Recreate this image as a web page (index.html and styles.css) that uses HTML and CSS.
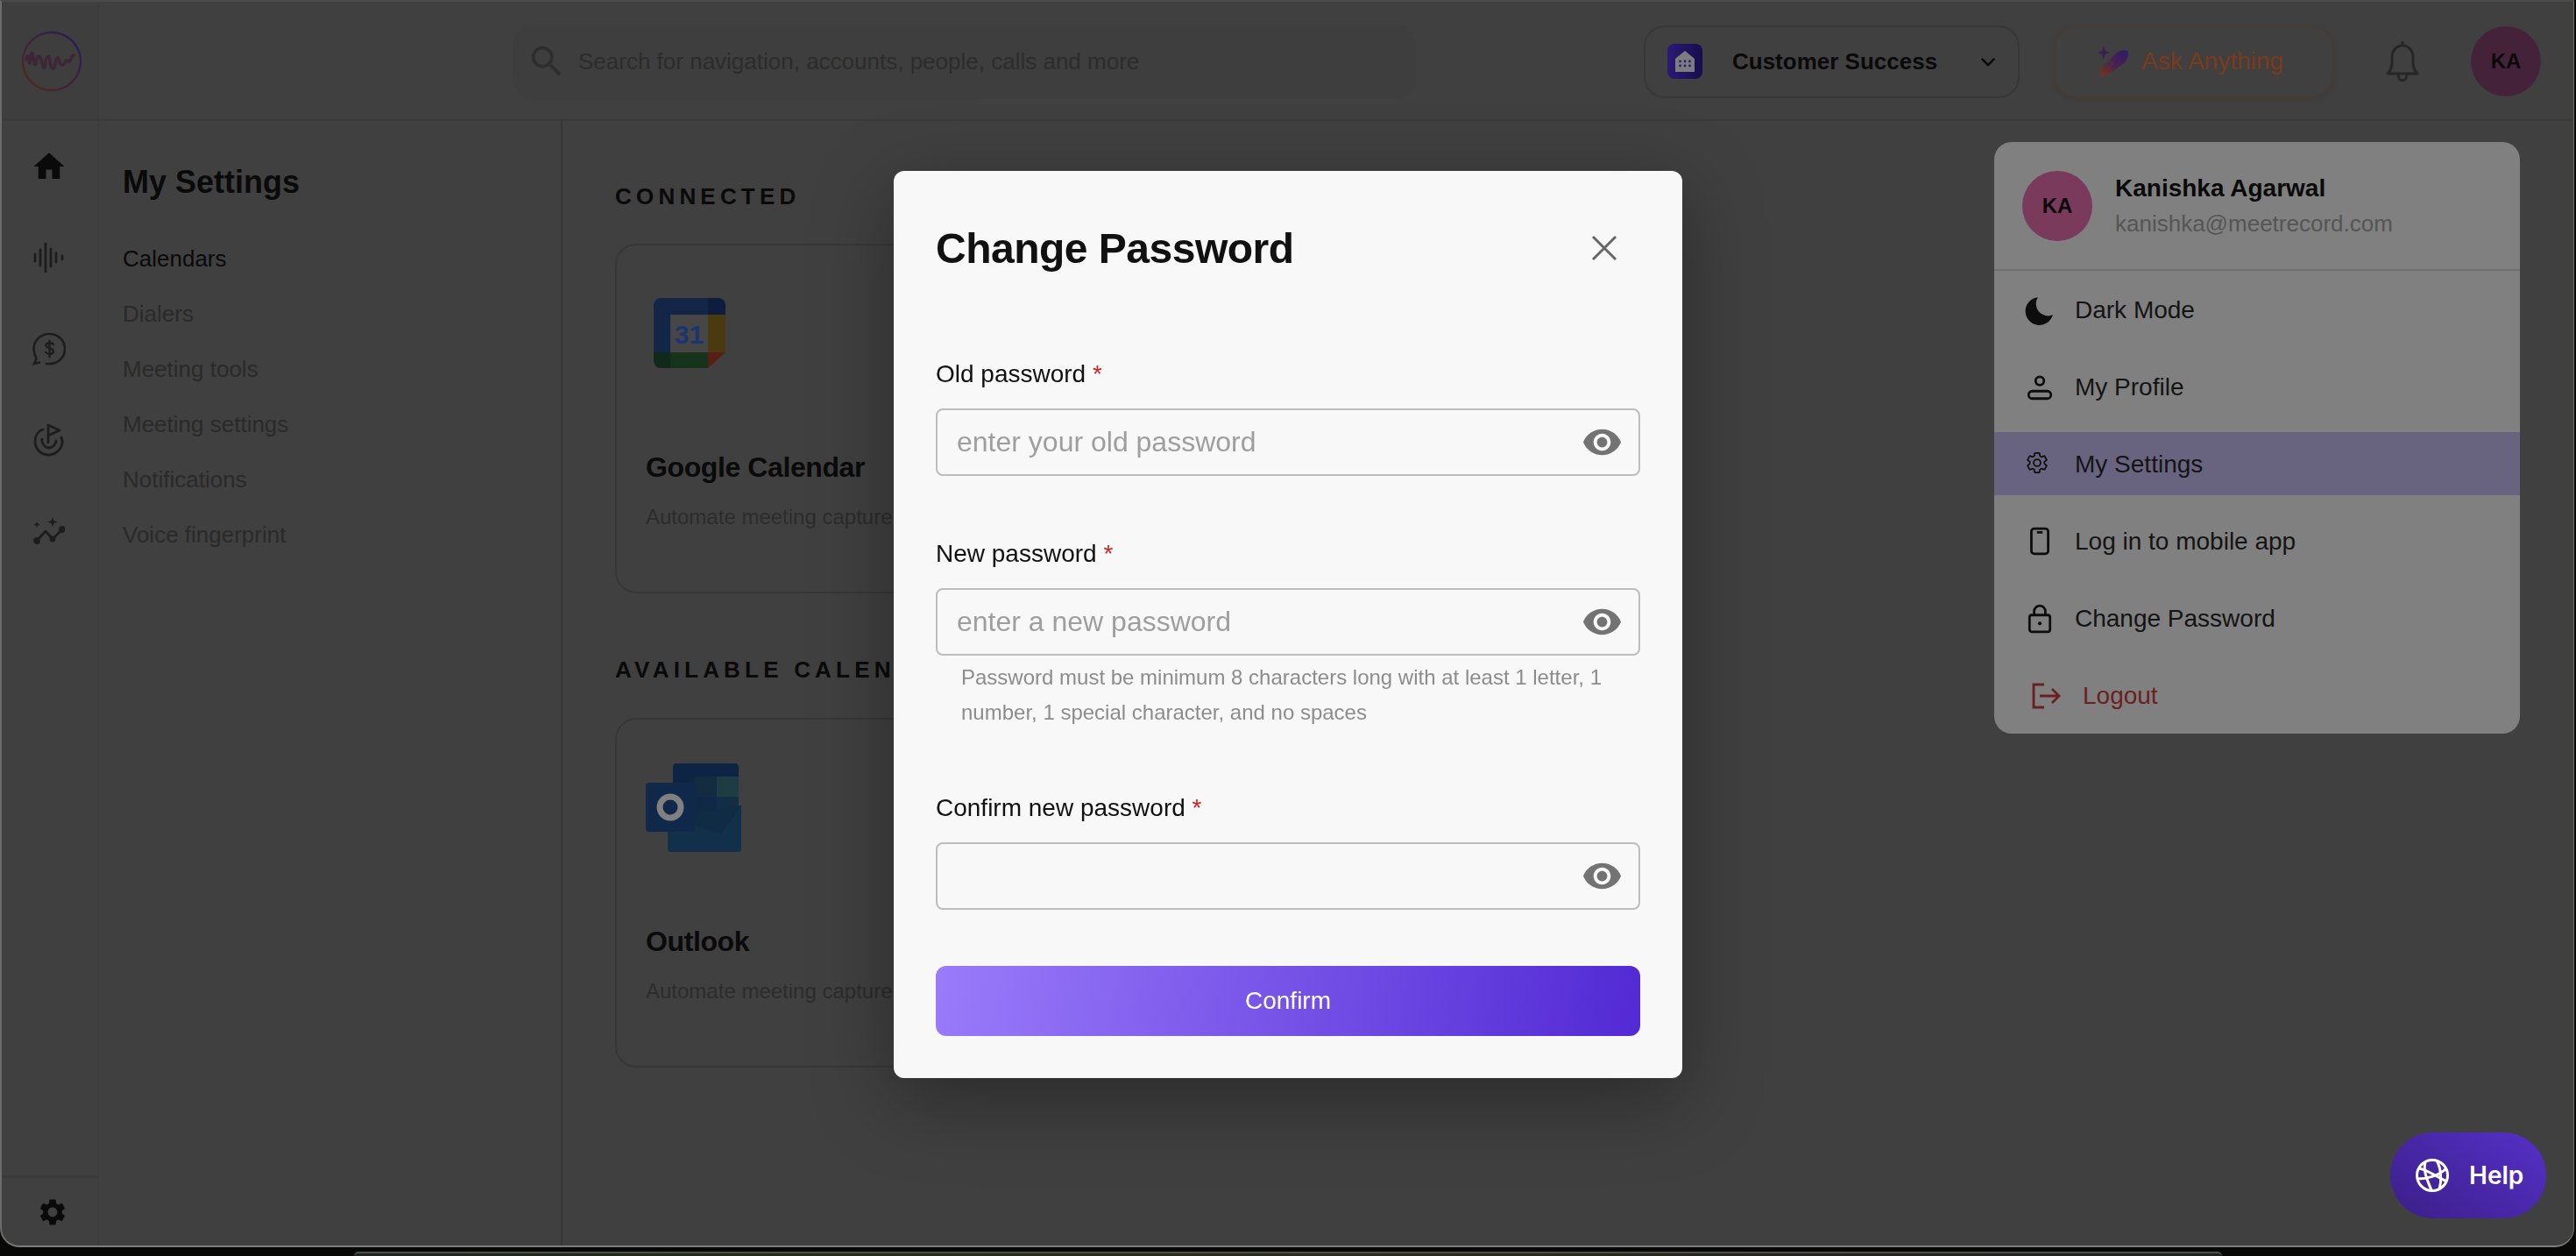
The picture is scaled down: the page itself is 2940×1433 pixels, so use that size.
FILE: index.html
```html
<!DOCTYPE html>
<html lang="en">
<head>
    <meta charset="UTF-8">
    <meta name="viewport" content="width=device-width, initial-scale=1.0">
    <title>Change Password</title>
    <link rel="stylesheet" href="styles.css">
</head>
<body>
    <div class="app">
        <header class="topbar">
            <div class="logo-cell">
                <svg class="logo" viewBox="0 0 70 70" fill="none">
                    <defs>
                        <linearGradient id="logoRing" x1="0" y1="1" x2="1" y2="0">
                            <stop offset="0" stop-color="#50291e"/>
                            <stop offset="0.5" stop-color="#40233c"/>
                            <stop offset="1" stop-color="#221c5a"/>
                        </linearGradient>
                    </defs>
                    <circle cx="35" cy="35" r="33" stroke="url(#logoRing)" stroke-width="2.4"/>
                    <path d="M6 33c1-5 2-6 3 0s1 6 2-2 2-7 3 0 2 10 3 6 1-8 3-8 3 4 4 8 2 8 3 4 1-9 3-11 3 0 3 5 2 9 4 8 2-8 3-10 2-4 3 0 2 6 4 6 3-2 4-4 2-1 3 0 2 0 3-3 2-3 3-4" stroke="#3c2638" stroke-width="3.6" stroke-linejoin="round" stroke-linecap="round"/>
                </svg>
            </div>
            <div class="search">
                <svg class="search-icon" viewBox="0 0 24 24" fill="#2e2e2e"><path d="M15.5 14h-.79l-.28-.27A6.47 6.47 0 0 0 16 9.5 6.5 6.5 0 1 0 9.5 16c1.61 0 3.09-.59 4.23-1.57l.27.28v.79l5 4.99L20.49 19l-4.99-5zm-6 0C7.01 14 5 11.99 5 9.5S7.01 5 9.5 5 14 7.01 14 9.5 11.99 14 9.5 14z"/></svg>
                <span class="search-text">Search for navigation, accounts, people, calls and more</span>
            </div>
            <div class="team-select">
                <svg class="team-icon" viewBox="0 0 40 40">
                    <defs>
                        <linearGradient id="teamBg" x1="0" y1="0" x2="1" y2="0">
                            <stop offset="0" stop-color="#2b1a76"/>
                            <stop offset="1" stop-color="#170d4e"/>
                        </linearGradient>
                    </defs>
                    <rect width="40" height="40" rx="8" fill="url(#teamBg)"/>
                    <path d="M9 17l11-9 11 9v15H9z" fill="#7d7d7d"/>
                    <g fill="#2b1a76">
                        <circle cx="14.5" cy="20" r="1.4"/><circle cx="20" cy="20" r="1.4"/><circle cx="25.5" cy="20" r="1.4"/>
                        <circle cx="14.5" cy="25" r="1.4"/><circle cx="20" cy="25" r="1.4"/><circle cx="25.5" cy="25" r="1.4"/>
                    </g>
                </svg>
                <span class="team-name">Customer Success</span>
                <svg class="chevron" viewBox="0 0 20 12" fill="none" stroke="#0a0a0a" stroke-width="2.8"><path d="M2 2l8 8 8-8"/></svg>
            </div>
            <div class="ask">
                <svg class="ask-icon" viewBox="0 0 36 36">
                    <defs>
                        <linearGradient id="askPen" x1="0" y1="1" x2="1" y2="0">
                            <stop offset="0" stop-color="#7a3516"/>
                            <stop offset="0.5" stop-color="#4a2250"/>
                            <stop offset="1" stop-color="#2a1a70"/>
                        </linearGradient>
                    </defs>
                    <path d="M3 36l1-10L20 10c4-4 10-6 14-4 2 4 0 10-4 14L14 32z" fill="url(#askPen)"/>
                    <path d="M7 0l2 6 5 2-5 2-2 6-2-6-5-2 5-2z" fill="#3a2050"/>
                    <path d="M13 14l1.800 5 5 1.800-5 1.800-1.800 5-1.800-5-5-1.800 5-1.800z" fill="#404040"/>
                    <path d="M13 16l1.200 3.600 3.600 1.200-3.600 1.200-1.200 3.600-1.200-3.600-3.600-1.200 3.600-1.200z" fill="#4c2355"/>
                </svg>
                <span class="ask-text">Ask Anything</span>
            </div>
            <svg class="bell" viewBox="0 0 44 48" fill="none" stroke="#262626" stroke-width="3">
                <path d="M22 1v5"/>
                <path d="M5 38c3-3 5-7 5-13v-6c0-7 5-13 12-13s12 6 12 13v6c0 6 2 10 5 13z" stroke-linejoin="round"/>
                <path d="M17 39c0 9 10 9 10 0"/>
            </svg>
            <div class="avatar avatar-top">KA</div>
        </header>

        <div class="body">
            <nav class="rail">
                <a class="rail-item">
                    <svg width="42" height="42" viewBox="0 0 24 24" fill="#0a0a0a"><path d="M10 20v-6h4v6h5v-8h3L12 3 2 12h3v8z"/></svg>
                </a>
                <a class="rail-item">
                    <svg width="36" height="34" viewBox="0 0 36 34" fill="none" stroke="#1d1d1d" stroke-width="2.8" stroke-linecap="round">
                        <path d="M2 13v8M8 8v18M14 1v32M20 7v20M26 12v10M33 15v4"/>
                    </svg>
                </a>
                <a class="rail-item">
                    <svg width="38" height="38" viewBox="0 0 38 38" fill="none" stroke="#1d1d1d" stroke-width="2.6" stroke-linecap="round">
                        <path d="M16 36h4c9 0 17-7 17-17S29 2 19 2 1.500 10 1.500 19c0 5 1.500 8 3 11l-2.500 6 6-1.500"/>
                        <path d="M24 14c-1-2-8-3-8.500 1-.5 4 9 2.500 8.500 7-.5 4-7 3-9 1M19.500 10v18" stroke-width="2.4"/>
                    </svg>
                </a>
                <a class="rail-item">
                    <svg width="36" height="38" viewBox="0 0 36 38" fill="none" stroke="#1d1d1d" stroke-width="2.8" stroke-linecap="round" stroke-linejoin="round">
                        <path d="M11 7C5 9 2 15 2 21c0 8 7 15 15 15 9 0 16-7 16-15 0-2-.5-4-1-5"/>
                        <path d="M10 18c-1 4 3 10 7.500 10S26 24 26 20"/>
                        <path d="M17 22V2l13 6-13 6"/>
                    </svg>
                </a>
                <a class="rail-item">
                    <svg width="36" height="32" viewBox="0 0 36 32" fill="none" stroke="#1d1d1d" stroke-width="2.8" stroke-linecap="round" stroke-linejoin="round">
                        <path d="M4 27l10-11 8 9 11-11"/>
                        <circle cx="4" cy="27" r="2.500" fill="#1d1d1d"/>
                        <circle cx="22" cy="25" r="2" fill="#1d1d1d"/>
                        <circle cx="33" cy="14" r="2.500" fill="#1d1d1d"/>
                        <path d="M22 0l1.500 4 4 1.500-4 1.500L22 11l-1.500-4-4-1.500 4-1.500z" fill="#1d1d1d" stroke="none"/>
                        <path d="M4 5l1 2.500 2.500 1-2.500 1L4 12l-1-2.500-2.500-1 2.500-1z" fill="#1d1d1d" stroke="none"/>
                    </svg>
                </a>
                <a class="rail-foot">
                    <svg width="36" height="36" viewBox="0 0 24 24" fill="#0a0a0a"><path d="M19.14 12.94c.04-.3.06-.61.06-.94 0-.32-.02-.64-.07-.94l2.03-1.58c.18-.14.23-.41.12-.61l-1.92-3.32c-.12-.22-.37-.29-.59-.22l-2.39.96c-.5-.38-1.03-.7-1.62-.94l-.36-2.54c-.04-.24-.24-.41-.48-.41h-3.84c-.24 0-.43.17-.47.41l-.36 2.54c-.59.24-1.13.57-1.62.94l-2.39-.96c-.22-.08-.47 0-.59.22L2.74 8.87c-.12.21-.08.47.12.61l2.03 1.58c-.05.3-.09.63-.09.94s.02.64.07.94l-2.03 1.58c-.18.14-.23.41-.12.61l1.92 3.32c.12.22.37.29.59.22l2.39-.96c.5.38 1.03.7 1.62.94l.36 2.54c.05.24.24.41.48.41h3.84c.24 0 .44-.17.47-.41l.36-2.54c.59-.24 1.13-.56 1.62-.94l2.39.96c.22.08.47 0 .59-.22l1.92-3.32c.12-.22.07-.47-.12-.61l-2.01-1.58zM12 15.6c-1.98 0-3.6-1.62-3.6-3.6s1.62-3.6 3.6-3.6 3.6 1.62 3.6 3.6-1.62 3.6-3.6 3.6z"/></svg>
                </a>
            </nav>

            <aside class="settings-nav">
                <h2 class="settings-title">My Settings</h2>
                <ul class="settings-list">
                    <li class="active">Calendars</li>
                    <li>Dialers</li>
                    <li>Meeting tools</li>
                    <li>Meeting settings</li>
                    <li>Notifications</li>
                    <li>Voice fingerprint</li>
                </ul>
            </aside>

            <main class="content">
                <h3 class="section-title">CONNECTED</h3>
                <div class="card">
                    <div class="card-logo">
                        <svg class="gcal" viewBox="0 0 82 80">
                            <path d="M8 0h54v19H19v43H0V8a8 8 0 0 1 8-8z" fill="#142648"/>
                            <path d="M62 0h12a8 8 0 0 1 8 8v11H62z" fill="#0e1d3e"/>
                            <rect x="19" y="19" width="43" height="43" fill="#464646"/>
                            <rect x="62" y="19" width="20" height="43" fill="#4a3a10"/>
                            <path d="M19 62h43v18H19z" fill="#16331c"/>
                            <path d="M0 62h19v18H8a8 8 0 0 1-8-8z" fill="#10291a"/>
                            <path d="M62 62h20L62 80z" fill="#5a1d14"/>
                            <text x="40.500" y="52" class="gcal-date">31</text>
                        </svg>
                    </div>
                    <div class="card-title">Google Calendar</div>
                    <div class="card-desc">Automate meeting capture,</div>
                </div>

                <h3 class="section-title section-next">AVAILABLE CALENDARS</h3>
                <div class="card">
                    <div class="card-logo">
                        <svg class="outlook" viewBox="0 0 109 101">
                            <path d="M35 0h67a4 4 0 0 1 4 4v60H31V4a4 4 0 0 1 4-4z" fill="#0e2444"/>
                            <rect x="56" y="15" width="25" height="23" fill="#132c42"/>
                            <rect x="81" y="15" width="25" height="23" fill="#1d3c44"/>
                            <rect x="56" y="38" width="25" height="23" fill="#0f2846"/>
                            <rect x="81" y="38" width="25" height="23" fill="#132d44"/>
                            <path d="M25 62l84-14v49a4 4 0 0 1-4 4H29a4 4 0 0 1-4-4z" fill="#102c44"/>
                            <path d="M25 62l62 18 22-32v49a4 4 0 0 1-4 4H29a4 4 0 0 1-4-4z" fill="#12304a"/>
                            <rect x="0" y="22" width="56" height="56" rx="4" fill="#10294a"/>
                            <ellipse cx="28" cy="50" rx="12" ry="12" fill="none" stroke="#808080" stroke-width="7"/>
                        </svg>
                    </div>
                    <div class="card-title">Outlook</div>
                    <div class="card-desc">Automate meeting capture,</div>
                </div>
            </main>
        </div>

        <div class="user-menu">
            <div class="menu-head">
                <div class="avatar avatar-menu">KA</div>
                <div>
                    <div class="menu-name">Kanishka Agarwal</div>
                    <div class="menu-email">kanishka@meetrecord.com</div>
                </div>
            </div>
            <a class="menu-item">
                <svg class="menu-icon" viewBox="0 0 32 32" fill="#0d0d0d"><path d="M14 2a15 15 0 1 0 16 19A13 13 0 0 1 14 2z"/></svg>
                Dark Mode
            </a>
            <a class="menu-item">
                <svg class="menu-icon" viewBox="0 0 32 32" fill="none" stroke="#0d0d0d" stroke-width="2.6">
                    <circle cx="16" cy="9" r="4.500"/>
                    <rect x="4" y="20" width="24" height="8" rx="4"/>
                </svg>
                My Profile
            </a>
            <a class="menu-item menu-item-active">
                <svg class="menu-icon menu-icon-gear" viewBox="0 0 24 24" fill="none" stroke="#0d0d0d" stroke-width="1.500" stroke-linejoin="round"><path d="M19.14 12.94c.04-.3.06-.61.06-.94 0-.32-.02-.64-.07-.94l2.03-1.58c.18-.14.23-.41.12-.61l-1.92-3.32c-.12-.22-.37-.29-.59-.22l-2.39.96c-.5-.38-1.03-.7-1.62-.94l-.36-2.54c-.04-.24-.24-.41-.48-.41h-3.84c-.24 0-.43.17-.47.41l-.36 2.54c-.59.24-1.13.57-1.62.94l-2.39-.96c-.22-.08-.47 0-.59.22L2.74 8.87c-.12.21-.08.47.12.61l2.03 1.58c-.05.3-.09.63-.09.94s.02.64.07.94l-2.03 1.58c-.18.14-.23.41-.12.61l1.92 3.32c.12.22.37.29.59.22l2.39-.96c.5.38 1.03.7 1.62.94l.36 2.54c.05.24.24.41.48.41h3.84c.24 0 .44-.17.47-.41l.36-2.54c.59-.24 1.13-.56 1.62-.94l2.39.96c.22.08.47 0 .59-.22l1.92-3.32c.12-.22.07-.47-.12-.61l-2.01-1.58z"/><circle cx="12" cy="12" r="3.400"/></svg>
                My Settings
            </a>
            <a class="menu-item">
                <svg class="menu-icon" viewBox="0 0 32 32" fill="none" stroke="#0d0d0d" stroke-width="2.6">
                    <rect x="7" y="2" width="18" height="27" rx="3"/>
                    <path d="M13 6h6"/>
                </svg>
                Log in to mobile app
            </a>
            <a class="menu-item">
                <svg class="menu-icon" viewBox="0 0 32 32" fill="none" stroke="#0d0d0d" stroke-width="2.6">
                    <rect x="5" y="12" width="22" height="18" rx="2.500"/>
                    <path d="M10 12V8a6 6 0 0 1 12 0v4"/>
                    <circle cx="16" cy="21" r="2" fill="#0d0d0d" stroke="none"/>
                </svg>
                Change Password
            </a>
            <a class="menu-item menu-item-logout">
                <svg class="logout-icon" viewBox="0 0 34 30" fill="none" stroke="#6a2020" stroke-width="2.800">
                    <path d="M14 2H2v26h12"/>
                    <path d="M9 15h22M23 7l8 8-8 8"/>
                </svg>
                Logout
            </a>
        </div>

        <button class="help">
            <svg class="help-globe" viewBox="0 0 40 40" fill="none" stroke="#fff" stroke-width="3">
                <circle cx="20" cy="20" r="17.500"/>
                <path d="M12 5c-3 10 3 22 7 32M25 3c5 9 6 22 3 33M3 24c10 0 24-3 33-12M5 12c9 2 22 10 31 15"/>
            </svg>
            Help
        </button>
    </div>

    <div class="dock"></div>

    <div class="overlay">
        <div class="modal">
            <div class="modal-head">
                <h2 class="modal-title">Change Password</h2>
                <svg class="modal-close" viewBox="0 0 30 30" fill="none" stroke="#666" stroke-width="3"><path d="M2 2l26 26M28 2L2 28"/></svg>
            </div>

            <div class="field field-first">
                <label class="field-label" for="oldPassword">Old password <span class="req">*</span></label>
                <div class="input-wrap">
                    <input class="field-input" id="oldPassword" type="password" placeholder="enter your old password">
                    <svg class="eye" viewBox="0 0 24 24" fill="#737373"><path d="M12 4.500C7 4.500 2.730 7.610 1 12c1.730 4.390 6 7.500 11 7.500s9.270-3.110 11-7.500c-1.730-4.390-6-7.500-11-7.500zM12 17c-2.760 0-5-2.240-5-5s2.240-5 5-5 5 2.240 5 5-2.240 5-5 5zm0-8c-1.660 0-3 1.340-3 3s1.340 3 3 3 3-1.340 3-3-1.340-3-3-3z"/></svg>
                </div>
            </div>

            <div class="field">
                <label class="field-label" for="newPassword">New password <span class="req">*</span></label>
                <div class="input-wrap">
                    <input class="field-input" id="newPassword" type="password" placeholder="enter a new password">
                    <svg class="eye" viewBox="0 0 24 24" fill="#737373"><path d="M12 4.500C7 4.500 2.730 7.610 1 12c1.730 4.390 6 7.500 11 7.500s9.270-3.110 11-7.500c-1.730-4.390-6-7.500-11-7.500zM12 17c-2.760 0-5-2.240-5-5s2.240-5 5-5 5 2.240 5 5-2.240 5-5 5zm0-8c-1.660 0-3 1.340-3 3s1.340 3 3 3 3-1.340 3-3-1.340-3-3-3z"/></svg>
                </div>
                <p class="field-help">Password must be minimum 8 characters long with at least 1 letter, 1 number, 1 special character, and no spaces</p>
            </div>

            <div class="field">
                <label class="field-label" for="confirmPassword">Confirm new password <span class="req">*</span></label>
                <div class="input-wrap">
                    <input class="field-input" id="confirmPassword" type="password">
                    <svg class="eye" viewBox="0 0 24 24" fill="#737373"><path d="M12 4.500C7 4.500 2.730 7.610 1 12c1.730 4.390 6 7.500 11 7.500s9.270-3.110 11-7.500c-1.730-4.390-6-7.500-11-7.500zM12 17c-2.760 0-5-2.240-5-5s2.240-5 5-5 5 2.240 5 5-2.240 5-5 5zm0-8c-1.660 0-3 1.340-3 3s1.340 3 3 3 3-1.340 3-3-1.340-3-3-3z"/></svg>
                </div>
            </div>

            <button class="confirm-btn">Confirm</button>
        </div>
    </div>
</body>
</html>
```

FILE: styles.css
```css
* {
    box-sizing: border-box;
}

html,
body {
    height: 1433px;
}

body {
    margin: 0;
    overflow: hidden;
    background: #080806;
    font-family: "Liberation Sans", Arial, sans-serif;
    color: #0a0a0a;
}

h2,
h3,
p,
ul {
    margin: 0;
    padding: 0;
}

/* app frame, all colours are the dimmed ones seen under the overlays */
.app {
    position: relative;
    display: flex;
    flex-direction: column;
    width: 2938px;
    height: 1423px;
    background: #404040;
    border-left: 2px solid #6c6c6c;
    border-top: 2px solid #4a4a4a;
    border-bottom: 2px solid #7d7d7d;
    border-right: 1px solid #6c6c6c;
    border-radius: 0 0 22px 22px;
}

.dock {
    width: 2132px;
    height: 5px;
    margin: 5px 0 0 404px;
    background: linear-gradient(90deg, #1e2422, #262d1c 25%, #2e2a22 55%, #262420 80%, #1e2322);
    border-top: 2px solid #4a4f48;
    border-radius: 14px 14px 0 0;
}

.topbar {
    display: flex;
    align-items: center;
    flex: none;
    height: 136px;
    padding-top: 2px;
    border-bottom: 2px solid #3a3a3a;
}

.logo-cell {
    display: flex;
    align-items: center;
    justify-content: center;
    flex: none;
    align-self: stretch;
    width: 111px;
    background: #3e3e3e;
    border-right: 1px solid #3a3a3a;
}

.logo {
    width: 70px;
    height: 70px;
    margin-left: 3px;
}

.search {
    display: flex;
    align-items: center;
    flex: none;
    width: 1031px;
    height: 85px;
    margin-left: 472px;
    padding-left: 16px;
    background: #3e3e3e;
    border-radius: 24px;
}

.search-icon {
    width: 46px;
    height: 46px;
}

.search-text {
    margin-left: 13px;
    font-size: 26px;
    color: #2c2c2c;
}

.team-select {
    display: flex;
    align-items: center;
    flex: none;
    width: 429px;
    height: 83px;
    margin-left: 260px;
    padding-left: 25px;
    border: 2px solid #373737;
    border-radius: 24px;
}

.team-icon {
    width: 40px;
    height: 40px;
}

.team-name {
    margin-left: 34px;
    font-size: 26px;
    font-weight: 700;
}

.chevron {
    width: 18px;
    height: 11px;
    margin-left: 49px;
}

.ask {
    display: flex;
    align-items: center;
    flex: none;
    width: 319px;
    height: 81px;
    margin-left: 39px;
    padding-left: 48px;
    border: 2px solid #443c39;
    border-radius: 24px;
    box-shadow: 0 2px 4px #423a34;
}

.ask-icon {
    width: 36px;
    height: 36px;
}

.ask-text {
    margin-left: 14px;
    font-size: 28px;
    color: #7c3a1c;
}

.bell {
    flex: none;
    width: 44px;
    height: 48px;
    margin-left: 57px;
}

.avatar {
    display: flex;
    align-items: center;
    justify-content: center;
    flex: none;
    width: 80px;
    height: 80px;
    border-radius: 50%;
    font-size: 24px;
    font-weight: 700;
}

.avatar-top {
    margin-left: 56px;
    background: #44233a;
}

.body {
    display: flex;
    flex: 1;
    min-height: 0;
}

.rail {
    display: flex;
    flex-direction: column;
    flex: none;
    width: 111px;
    border-right: 1px solid #3a3a3a;
}

.rail-item {
    display: flex;
    align-items: center;
    justify-content: center;
    flex: none;
    height: 104px;
    padding-right: 3px;
}

.rail-foot {
    display: flex;
    align-items: center;
    justify-content: center;
    height: 80px;
    margin-top: auto;
    padding-left: 6px;
    border-top: 3px solid #3a3a3a;
}

.settings-nav {
    flex: none;
    width: 529px;
    padding: 48px 0 0 27px;
    border-right: 2px solid #363636;
}

.settings-title {
    font-size: 36px;
    line-height: 44px;
    font-weight: 700;
}

.settings-list {
    margin-top: 34px;
    list-style: none;
    font-size: 26px;
    color: #2a2a2a;
}

.settings-list li {
    height: 63px;
    line-height: 63px;
}

.settings-list .active {
    color: #0a0a0a;
}

.content {
    flex: 1;
    min-width: 0;
    padding: 71px 0 0 60px;
}

.section-title {
    font-size: 26px;
    line-height: 30px;
    font-weight: 700;
    letter-spacing: 5.2px;
    white-space: nowrap;
}

.section-next {
    margin-top: 72px;
    padding-bottom: 1px;
}

.card {
    width: 1100px;
    height: 399px;
    margin-top: 39px;
    padding: 0 33px;
    border: 2px solid #373737;
    border-radius: 24px;
}

.card-logo {
    display: flex;
    align-items: center;
    height: 200px;
}

.gcal {
    width: 82px;
    height: 80px;
    margin-left: 9px;
}

.gcal-date {
    font-family: "Liberation Sans", Arial, sans-serif;
    font-size: 30px;
    font-weight: 700;
    text-anchor: middle;
    fill: #1c3470;
}

.outlook {
    width: 109px;
    height: 101px;
}

.card-title {
    margin-top: 33px;
    font-size: 32px;
    line-height: 40px;
    font-weight: 700;
    letter-spacing: -0.4px;
}

.card-desc {
    margin-top: 21px;
    font-size: 24px;
    line-height: 32px;
    color: #2c2c2c;
    white-space: nowrap;
}

/* account dropdown */
.user-menu {
    position: absolute;
    top: 160px;
    left: 2274px;
    display: flex;
    flex-direction: column;
    width: 600px;
    height: 675px;
    background: #808080;
    border-radius: 20px;
}

.menu-head {
    display: flex;
    align-items: center;
    flex: none;
    height: 147px;
    padding-left: 32px;
    border-bottom: 2px solid #6f6f6f;
}

.avatar-menu {
    margin-right: 26px;
    background: #7a3a5c;
}

.menu-name {
    font-size: 28px;
    line-height: 36px;
    font-weight: 700;
}

.menu-email {
    margin-top: 5px;
    font-size: 26px;
    line-height: 34px;
    color: #555;
}

.menu-item {
    display: flex;
    align-items: center;
    flex: none;
    height: 72px;
    margin: 8px 0;
    padding: 1px 0 0 32px;
    font-size: 28px;
    color: #141414;
}

.menu-item-active {
    background: #686480;
}

.menu-item-logout {
    padding-left: 43px;
    color: #6a2020;
}

.menu-icon {
    flex: none;
    width: 40px;
    height: 40px;
    margin-right: 20px;
    padding: 3px;
}

.menu-icon-gear {
    padding: 4px 6px 8px 0;
}

.logout-icon {
    flex: none;
    width: 34px;
    height: 30px;
    margin-right: 24px;
}

.help {
    position: absolute;
    top: 1290px;
    left: 2726px;
    display: flex;
    align-items: center;
    width: 178px;
    height: 98px;
    padding: 0 0 0 28px;
    border: none;
    border-radius: 49px;
    background: linear-gradient(35deg, #3b1f88, #5630c8);
    font-family: Inter, "Liberation Sans", sans-serif;
    font-size: 28px;
    font-weight: 600;
    color: #fff;
}

.help-globe {
    width: 40px;
    height: 40px;
    margin-right: 22px;
}

/* change password dialog */
.overlay {
    position: fixed;
    inset: 0;
    display: flex;
    align-items: flex-start;
    justify-content: center;
    padding-top: 195px;
}

.modal {
    width: 900px;
    height: 1035px;
    padding: 58px 48px 48px;
    background: #f8f8f8;
    border-radius: 12px;
    box-shadow: 0 24px 90px rgba(0, 0, 0, 0.35);
}

.modal-head {
    display: flex;
    align-items: center;
    justify-content: space-between;
    height: 60px;
}

.modal-title {
    font-size: 48px;
    font-weight: 700;
    letter-spacing: -0.5px;
    color: #111;
}

.modal-close {
    width: 30px;
    height: 30px;
    margin-right: 26px;
}

.field {
    margin-top: 71px;
}

.field-first {
    margin-top: 96px;
}

.field-label {
    display: block;
    margin-bottom: 21px;
    font-size: 28px;
    line-height: 36px;
    color: #111;
}

.req {
    color: #c62828;
}

.input-wrap {
    display: flex;
    align-items: center;
    height: 77px;
    border: 2px solid #bdbdbd;
    border-radius: 8px;
}

.field-input {
    flex: 1;
    min-width: 0;
    height: 100%;
    padding: 0 0 0 22px;
    border: none;
    outline: none;
    background: transparent;
    font-family: "Liberation Sans", Arial, sans-serif;
    font-size: 32px;
    color: #111;
}

.field-input::placeholder {
    color: #9e9e9e;
}

.eye {
    flex: none;
    width: 47px;
    height: 47px;
    margin-right: 18px;
}

.field-help {
    margin-top: 5px;
    padding: 0 28px 0 29px;
    font-size: 24px;
    line-height: 40px;
    color: #8c8c8c;
}

.confirm-btn {
    display: block;
    width: 100%;
    height: 80px;
    margin-top: 64px;
    border: none;
    border-radius: 12px;
    background: linear-gradient(100deg, #9a7bfa, #5229d4);
    font-family: "Liberation Sans", Arial, sans-serif;
    font-size: 28px;
    color: #fff;
}
```
